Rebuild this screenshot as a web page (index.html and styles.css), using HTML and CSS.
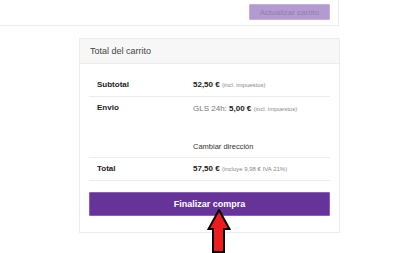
FILE: index.html
```html
<!DOCTYPE html>
<html>
<head>
    <title>Carrito</title>
    <meta charset="UTF-8">
    <meta name="viewport" content="width=device-width, initial-scale=1.0">
    <link rel="stylesheet" href="styles.css">
</head>
<body>

<div class="cart-actions">
    <button class="btn-update" disabled>Actualizar carrito</button>
</div>

<div class="cart-totals">
    <h2>Total del carrito</h2>
    <div class="totals-body">
        <table>
            <tr>
                <th>Subtotal</th>
                <td><strong>52,50&nbsp;€</strong> <small>(incl. impuestos)</small></td>
            </tr>
            <tr class="shipping">
                <th>Envio</th>
                <td>
                    <span class="method">GLS 24h: <strong>5,00&nbsp;€</strong> <small>(incl. impuestos)</small></span>
                    <a href="#" class="change-address">Cambiar dirección</a>
                </td>
            </tr>
            <tr>
                <th>Total</th>
                <td><strong>57,50&nbsp;€</strong> <small>(incluye 9,98 € IVA 21%)</small></td>
            </tr>
        </table>

        <a href="#" class="btn-checkout">Finalizar compra</a>
    </div>
</div>

<!-- red pointer arrow drawn over the checkout button -->
<svg class="pointer" width="24" height="44" viewBox="0 0 24 44">
    <polygon points="12,1 22.5,20 17,20 17,43 6,43 6,20 1.5,20" fill="#ee1c1c" stroke="#000" stroke-width="2"/>
</svg>

</body>
</html>
```

FILE: styles.css
```css
/* Global styles */
body {
    background-color: #ffffff;
    color: #333333;
    font-family: "Liberation Sans", Arial, sans-serif;
    margin: 0;
    padding: 0;
    position: relative;
    min-height: 253px;
}

/* Update cart row (cut off at the top) */
.cart-actions {
    width: 339px;
    height: 60px;
    margin-top: -34px;
    border-right: 1px solid #ececec;
    border-bottom: 1px solid #ececec;
    box-sizing: border-box;
    display: flex;
    justify-content: flex-end;
    align-items: flex-end;
    padding: 0 8px 5px 0;
}

.btn-update {
    width: 81px;
    height: 16px;
    background-color: #b39bd2;
    border: 1px solid #c2afdc;
    border-radius: 1px;
    color: #8f7fa5;
    font-family: inherit;
    font-size: 8px;
    padding: 0;
}

/* Cart totals */
.cart-totals {
    width: 261px;
    margin: 12px 0 0 79px;
    border: 1px solid #ececec;
    box-sizing: border-box;
}

.cart-totals h2 {
    margin: 0;
    height: 25px;
    line-height: 24px;
    padding-left: 10px;
    font-size: 9px;
    font-weight: normal;
    color: #444444;
    background-color: #f7f7f7;
    border-bottom: 1px solid #ececec;
    box-sizing: border-box;
}

.totals-body {
    padding: 10px 9px 16px 9px;
}

table {
    width: 100%;
    border-collapse: collapse;
    font-size: 8px;
}

th, td {
    text-align: left;
    vertical-align: top;
    padding: 6px 0 6px 0;
    line-height: 9px;
    border-bottom: 1px solid #ececec;
}

th {
    width: 96px;
    padding-left: 8px;
    color: #222222;
}

td strong {
    color: #222222;
}

small {
    font-size: 6px;
    color: #888888;
}

.method {
    display: block;
    color: #777777;
    margin-top: 1px;
}

.change-address {
    display: block;
    margin-top: 28px;
    color: #333333;
    font-size: 7.5px;
    text-decoration: none;
}

/* Checkout button */
.btn-checkout {
    display: block;
    margin-top: 11px;
    height: 24px;
    line-height: 22px;
    background-color: #663399;
    border: 1px solid #8a5cc4;
    border-radius: 1px;
    box-sizing: border-box;
    color: #ffffff;
    text-align: center;
    text-decoration: none;
    font-size: 9px;
    font-weight: bold;
}

.pointer {
    position: absolute;
    left: 207px;
    top: 209px;
}
```
